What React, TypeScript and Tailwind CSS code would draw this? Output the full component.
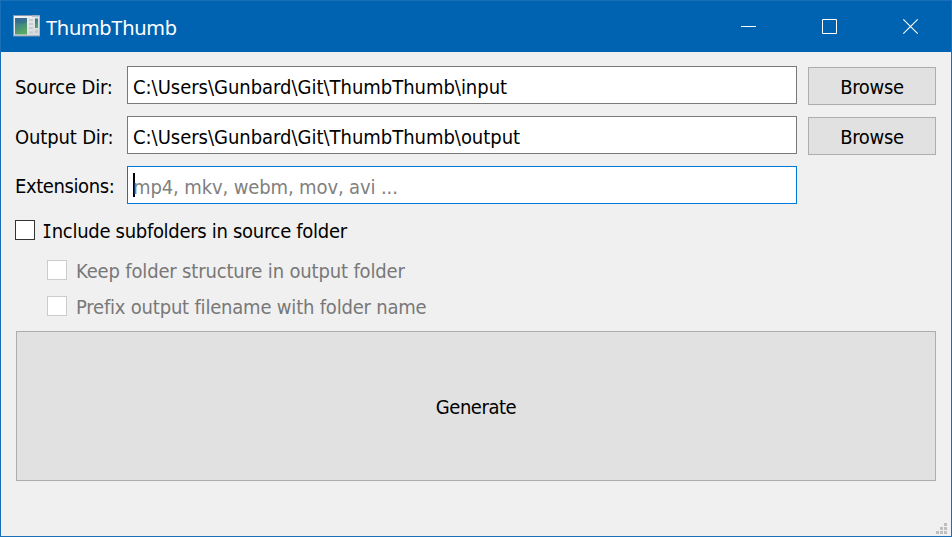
import React from "react";

const uiFont = "font-['DejaVu_Sans_Condensed','DejaVu_Sans',sans-serif] [font-stretch:condensed]";

function AppIcon() {
  return (
    <svg width="28" height="22" viewBox="0 0 28 22" className="-mt-px block shrink-0">
      <defs>
        <linearGradient id="pane" x1="0" y1="0" x2="0.4" y2="1">
          <stop offset="0" stopColor="#3a6c9c" />
          <stop offset="0.5" stopColor="#43897f" />
          <stop offset="1" stopColor="#58a866" />
        </linearGradient>
        <linearGradient id="frame" x1="0" y1="0" x2="1" y2="1">
          <stop offset="0" stopColor="#f2f3f4" />
          <stop offset="1" stopColor="#d5d8dc" />
        </linearGradient>
      </defs>
      <rect x="0" y="0" width="27" height="21.5" fill="#8298ad" />
      <rect x="1" y="1" width="25.5" height="19.5" fill="url(#frame)" />
      <rect x="19" y="0.5" width="7.5" height="1.5" fill="#b9c4d2" />
      <rect x="2" y="3" width="12" height="16.5" fill="url(#pane)" />
      <path d="M2 7 Q8 10 14 7 V3 H2Z" fill="#315f90" opacity=".5" />
      <path d="M16 5h4M16 9h4M16 13h4M16 17.5h4" stroke="#c8cdd3" strokeWidth="2" />
      <rect x="22" y="3.5" width="3" height="9.5" fill="url(#pane)" />
      <path d="M22 16.5h3" stroke="#c3c9cf" strokeWidth="3" />
    </svg>
  );
}

function Field({ label, labelClass, children, focused, browse }: {
  label: string;
  labelClass: string;
  children: React.ReactNode;
  focused?: boolean;
  browse?: boolean;
}) {
  return (
    <div className="flex h-[39px] items-start">
      <div className={`w-28 shrink-0 pt-[5px] leading-8 ${labelClass}`}>{label}</div>
      <div className={`flex h-[38px] w-[670px] shrink-0 items-center border bg-white pl-[5px] pt-[3px] ${focused ? "border-[#0078d7]" : "border-[#7a7a7a]"}`}>
        {children}
      </div>
      {browse && (
        <button className="ml-[11px] mt-px flex h-[38px] w-[128px] items-center justify-center border border-[#adadad] bg-[#e1e1e1] pt-[2px]">
          <span className="tracking-[-0.3px]">Browse</span>
        </button>
      )}
    </div>
  );
}

export default function App() {
  return (
    <div className={`flex h-[537px] w-[952px] flex-col overflow-hidden whitespace-nowrap border border-[#1a6fb8] bg-[#f0f0f0] text-[20px] text-black ${uiFont}`}>
      <header className="flex h-[51px] shrink-0 items-center bg-[#0063b1] pl-3 text-white">
        <AppIcon />
        <span className="ml-[5px] pt-[3px] font-['Noto_Sans','Open_Sans',sans-serif] text-[20px] font-normal [font-stretch:normal] tracking-[-0.3px]">ThumbThumb</span>
        <div className="ml-auto flex h-full items-center text-white">
          <svg width="81" height="51" viewBox="0 0 81 51"><path d="M33 25.5h15" stroke="currentColor" /></svg>
          <svg width="81" height="51" viewBox="0 0 81 51"><path d="M33.5 18.5h14v14h-14z" fill="none" stroke="currentColor" /></svg>
          <svg width="81" height="51" viewBox="0 0 81 51"><path d="M33.3 18.3l14.4 14.4M47.7 18.3L33.3 32.7" stroke="currentColor" strokeWidth="1.1" /></svg>
        </div>
      </header>
      <main className="flex flex-1 flex-col pl-[14px] pt-[14px]">
        <div className="flex flex-col gap-[11px]">
          <Field label="Source Dir:" labelClass="tracking-[-0.15px]" browse>
            <span className="tracking-[-0.02px]">C:\Users\Gunbard\Git\ThumbThumb\input</span>
          </Field>
          <Field label="Output Dir:" labelClass="tracking-[-0.15px]" browse>
            <span className="tracking-[-0.02px]">C:\Users\Gunbard\Git\ThumbThumb\output</span>
          </Field>
          <Field label="Extensions:" labelClass="tracking-[-0.4px] -mt-px" focused>
            <span className="-mt-1 h-6 w-[2px] bg-black" />
            <span className="-ml-[2px] tracking-[-0.12px] text-[#808080]">mp4, mkv, webm, mov, avi ...</span>
          </Field>
        </div>
        <label className="mt-[15px] flex h-5 items-center">
          <span className="h-5 w-5 shrink-0 border border-[#333333] bg-white" />
          <span className="ml-2 flex items-baseline pt-px tracking-[-0.3px]">
            <span className="-ml-[2px] -mr-[1px] inline-block scale-x-80 font-['DejaVu_Sans_Mono',monospace]">I</span>
            <span>nclude subfolders in source folder</span>
          </span>
        </label>
        <div className="ml-8 mt-5 flex flex-col gap-4 text-[#787878]">
          <label className="flex h-5 items-center">
            <span className="h-5 w-5 shrink-0 border border-[#cccccc] bg-white" />
            <span className="ml-[9px] pt-px tracking-[-0.16px]">Keep folder structure in output folder</span>
          </label>
          <label className="flex h-5 items-center">
            <span className="h-5 w-5 shrink-0 border border-[#cccccc] bg-white" />
            <span className="ml-[9px] pt-px tracking-[-0.2px]">Prefix output filename with folder name</span>
          </label>
        </div>
        <button className="ml-px mt-[15px] flex h-[150px] w-[920px] items-center justify-center border border-[#adadad] bg-[#e1e1e1] pt-[2px]">
          <span className="tracking-[-0.45px]">Generate</span>
        </button>
        <svg className="mb-[2px] ml-auto mr-[4px] mt-auto block" width="11" height="11" viewBox="0 0 11 11" fill="#bfbfbf">
          <path d="M8 0h3v3H8zM4 4h3v3H4zM8 4h3v3H8zM0 8h3v3H0zM4 8h3v3H4zM8 8h3v3H8z" />
        </svg>
      </main>
    </div>
  );
}
